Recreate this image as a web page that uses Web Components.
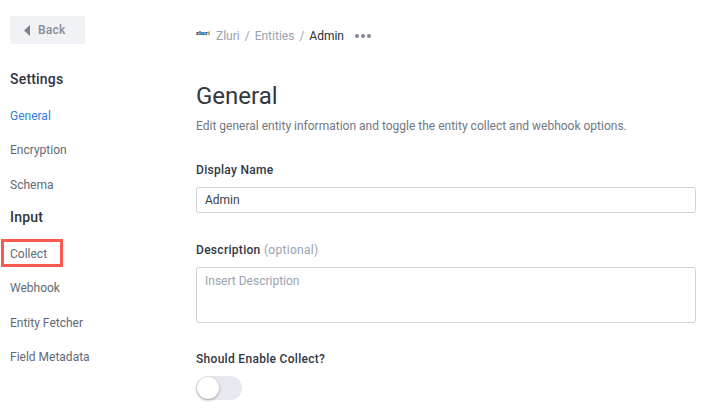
<!doctype html>
<html>
<head>
<meta charset="utf-8">
<style>
  html, body { margin: 0; height: 100%; overflow: hidden; background: #fff; }
  body { font-family: Roboto, Inter, sans-serif; }
</style>
</head>
<body>
<settings-page></settings-page>

<script>
  class BackButton extends HTMLElement {
    connectedCallback() {
      this.attachShadow({ mode: "open" }).innerHTML = `
        <style>
          :host { display: flex; align-items: center; gap: 8px; width: 75px; height: 28px; box-sizing: border-box;
            padding-left: 14px; background: #f0f2f6; border-radius: 3px; color: #868c96; font-size: 12px; font-weight: 500; letter-spacing: 0.2px; }
          svg { display: block; }
        </style>
        <svg width="6" height="11" viewBox="0 0 6 11"><path d="M6 0v11L0 5.5z" fill="#7c828c"/></svg>
        <slot></slot>`;
    }
  }

  class SideNav extends HTMLElement {
    connectedCallback() {
      this.attachShadow({ mode: "open" }).innerHTML = `
        <style>
          :host { display: block; position: relative; width: 196px; flex: none; box-sizing: border-box; padding: 16px 0 0 10px; }
          .items { display: flex; flex-direction: column; margin-top: 20px; }
          .mark { position: absolute; left: 1px; top: 239px; width: 62px; height: 28px; box-sizing: border-box; border: 3px solid #f9594e; }
        </style>
        <slot name="back"></slot>
        <div class="items"><slot></slot></div>
        <div class="mark"></div>`;
    }
  }

  class NavHead extends HTMLElement {
    connectedCallback() {
      this.attachShadow({ mode: "open" }).innerHTML = `
        <style>:host { display: flex; align-items: center; height: 30px; margin-bottom: 4.8px; color: #2f343b; font-size: 14px; font-weight: 500; letter-spacing: 0.2px; }</style>
        <slot></slot>`;
    }
  }

  class NavLink extends HTMLElement {
    connectedCallback() {
      this.attachShadow({ mode: "open" }).innerHTML = `
        <style>
          :host { display: flex; align-items: center; height: 34.4px; color: #626974; font-size: 12px; }
          :host([active]) { color: #2f7fdc; }
        </style>
        <slot></slot>`;
    }
  }

  class CrumbBar extends HTMLElement {
    connectedCallback() {
      this.attachShadow({ mode: "open" }).innerHTML = `
        <style>
          :host { display: flex; align-items: center; height: 24px; font-size: 12px; color: #9aa3af; }
          .logo { font: 700 7px "Liberation Serif", serif; color: #222; width: 20px; margin-top: -6px; }
          .logo b { color: #4a8a3a; }
          .sep { margin: 0 5px; }
          .now { color: #2a2f36; }
          .dots { display: flex; gap: 2px; margin-left: 11px; }
          .dots i { width: 4px; height: 4px; border-radius: 50%; background: #7f8691; }
        </style>
        <span class="logo">zlur<b>i</b></span>
        <span>Zluri</span><span class="sep">/</span><span>Entities</span><span class="sep">/</span><span class="now">Admin</span>
        <span class="dots"><i></i><i></i><i></i></span>`;
    }
  }

  class FormField extends HTMLElement {
    connectedCallback() {
      const hint = this.getAttribute("hint");
      this.attachShadow({ mode: "open" }).innerHTML = `
        <style>
          :host { display: block; }
          .label { font-size: 12px; font-weight: 500; color: #33383f; letter-spacing: 0.3px; line-height: 16px; margin-bottom: 9px; }
          .label span { font-weight: 400; color: #9aa3af; }
        </style>
        <div class="label">${this.getAttribute("label")}${hint ? ` <span>${hint}</span>` : ""}</div>
        <slot></slot>`;
    }
  }

  class TextBox extends HTMLElement {
    connectedCallback() {
      const ph = this.hasAttribute("placeholder");
      this.attachShadow({ mode: "open" }).innerHTML = `
        <style>
          :host { display: block; box-sizing: border-box; border: 1px solid #ccd1d9; border-radius: 3px; padding: 0 8px;
            height: 26px; line-height: 24px; font-size: 12px; color: #3a3f46; }
          :host([multi]) { height: 56px; padding-top: 1px; }
          .ph { color: #9aa3af; }
        </style>
        <span class="${ph ? "ph" : ""}">${ph ? this.getAttribute("placeholder") : this.getAttribute("value")}</span>`;
    }
  }

  class ToggleSwitch extends HTMLElement {
    connectedCallback() {
      this.attachShadow({ mode: "open" }).innerHTML = `
        <style>
          :host { display: flex; align-items: center; width: 46px; height: 24px; margin-top: 2px; border-radius: 12px; background: #e7e9ef; }
          i { width: 22px; height: 22px; border-radius: 50%; background: #fff; box-shadow: 0 1px 3px rgba(0,0,0,.35); margin-left: 1px; }
        </style>
        <i></i>`;
    }
  }

  class SettingsPage extends HTMLElement {
    connectedCallback() {
      this.attachShadow({ mode: "open" }).innerHTML = `
        <style>
          :host { display: flex; height: 419px; overflow: hidden; }
          main { flex: 1; display: flex; flex-direction: column; padding: 24px 16px 0 0; min-width: 0; }
          h1 { margin: 32px 0 0; font-size: 24px; font-weight: 400; line-height: 32px; color: #33383f; }
          p { margin: 5px 0 0; font-size: 12px; line-height: 18px; color: #717781; }
          form-field { margin-top: 27px; }
          form-field + form-field { margin-top: 29px; }
          form-field + form-field + form-field { margin-top: 28px; }
        </style>
        <side-nav>
          <back-button slot="back">Back</back-button>
          <nav-head>Settings</nav-head>
          <nav-link active>General</nav-link>
          <nav-link>Encryption</nav-link>
          <nav-link>Schema</nav-link>
          <nav-head>Input</nav-head>
          <nav-link>Collect</nav-link>
          <nav-link>Webhook</nav-link>
          <nav-link>Entity Fetcher</nav-link>
          <nav-link>Field Metadata</nav-link>
        </side-nav>
        <main>
          <crumb-bar></crumb-bar>
          <h1>General</h1>
          <p>Edit general entity information and toggle the entity collect and webhook options.</p>
          <form-field label="Display Name"><text-box value="Admin"></text-box></form-field>
          <form-field label="Description" hint="(optional)"><text-box multi placeholder="Insert Description"></text-box></form-field>
          <form-field label="Should Enable Collect?"><toggle-switch></toggle-switch></form-field>
        </main>`;
    }
  }

  window.customElements.define("back-button", BackButton);
  window.customElements.define("side-nav", SideNav);
  window.customElements.define("nav-head", NavHead);
  window.customElements.define("nav-link", NavLink);
  window.customElements.define("crumb-bar", CrumbBar);
  window.customElements.define("form-field", FormField);
  window.customElements.define("text-box", TextBox);
  window.customElements.define("toggle-switch", ToggleSwitch);
  window.customElements.define("settings-page", SettingsPage);
</script>
</body>
</html>
